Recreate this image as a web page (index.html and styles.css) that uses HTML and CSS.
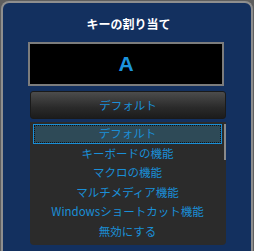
FILE: index.html
```html
<!DOCTYPE html>
<html>
<head>
  <meta charset="utf-8">
  <link rel="stylesheet" href="styles.css">
</head>
<body>
  <div class="panel">
    <h1 class="title">キーの割り当て</h1>
    <div class="key-box">A</div>
    <div class="select-button">デフォルト</div>
    <div class="list-wrap">
      <ul class="option-list">
        <li class="option selected">デフォルト</li>
        <li class="option">キーボードの機能</li>
        <li class="option">マクロの機能</li>
        <li class="option">マルチメディア機能</li>
        <li class="option">Windowsショートカット機能</li>
        <li class="option">無効にする</li>
      </ul>
      <div class="scroll-thumb"></div>
    </div>
  </div>
</body>
</html>
```

FILE: styles.css
```css
* {
  margin: 0;
  padding: 0;
  box-sizing: border-box;
}

body {
  background: #5e5e5e;
  font-family: "Noto Sans CJK JP", "Noto Sans", sans-serif;
  height: 251px;
  overflow: hidden;
  padding: 1px 1px 0 1px;
}

.panel {
  height: 250px;
  background: #13305f;
  border: 2px solid #8e8e8e;
  border-bottom: none;
  border-radius: 8px 8px 0 0;
  padding: 12px 24px 0 27px;
  display: flex;
  flex-direction: column;
}

.title {
  color: #ffffff;
  font-size: 12px;
  font-weight: bold;
  line-height: 18px;
  text-align: center;
  margin: 0 -3px 9px -3px;
}

.key-box {
  width: 196px;
  height: 44px;
  margin-left: -2px;
  background: #000000;
  border: 2px solid #7c7c7c;
  color: #1c93dc;
  font-family: "Liberation Sans", Arial, sans-serif;
  font-weight: bold;
  font-size: 21px;
  display: flex;
  align-items: center;
  justify-content: center;
}

.select-button {
  width: 196px;
  height: 28px;
  margin-top: 5px;
  border-radius: 3px;
  background: linear-gradient(#4c4c4c, #2a2a2a 60%, #1c1c1c);
  border: 1px solid #1a1a1a;
  color: #1a8fd8;
  font-size: 11.5px;
  display: flex;
  align-items: center;
  justify-content: center;
}

.list-wrap {
  position: relative;
  width: 196px;
  height: 123px;
  margin-top: 3px;
  background: #2b2b2b;
  border-radius: 0 0 4px 4px;
}

.option-list {
  list-style: none;
  padding: 2px 4px 0 3px;
}

.option {
  color: #1a8fd8;
  font-size: 11.5px;
  line-height: 19.6px;
  height: 19.6px;
  text-align: center;
}

.option.selected {
  background: #2e4a57;
  border: 1px solid #1a8fd8;
  outline: 1px dotted #111;
  outline-offset: -2px;
  line-height: 17.6px;
}

.scroll-thumb {
  position: absolute;
  top: 2px;
  right: 0;
  width: 2px;
  height: 36px;
  background: #8a8a8a;
}
```
